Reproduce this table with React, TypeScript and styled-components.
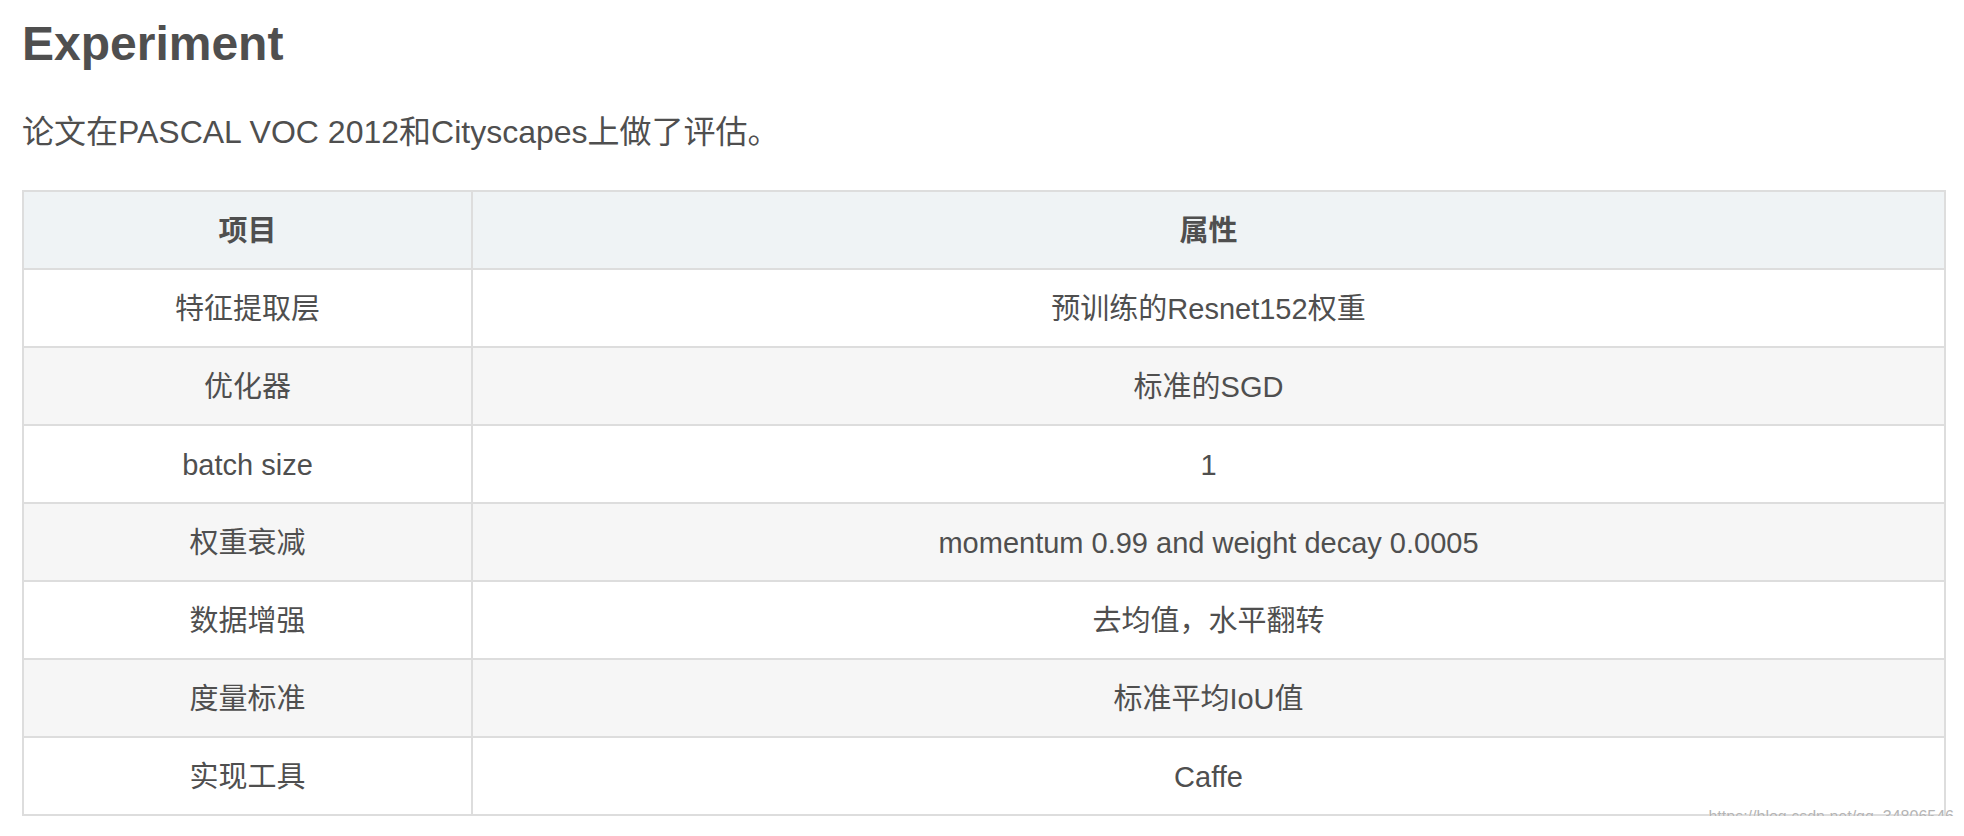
import React from 'react'
import styled, { createGlobalStyle } from 'styled-components'

const GlobalStyle = createGlobalStyle`
  html, body {
    margin: 0;
    padding: 0;
    background: #ffffff;
  }
  body {
    font-family: "Liberation Sans", Arial, "Noto Sans CJK SC", sans-serif;
    color: #4f4f4f;
  }
`

const rows: [string, string][] = [
  ['特征提取层', '预训练的Resnet152权重'],
  ['优化器', '标准的SGD'],
  ['batch size', '1'],
  ['权重衰减', 'momentum 0.99 and weight decay 0.0005'],
  ['数据增强', '去均值，水平翻转'],
  ['度量标准', '标准平均IoU值'],
  ['实现工具', 'Caffe'],
]

export default function App() {
  return (
    <Page>
      <GlobalStyle />
      <Title>Experiment</Title>
      <Text>论文在PASCAL VOC 2012和Cityscapes上做了评估。</Text>
      <TableWrap>
        <Table>
          <colgroup>
            <col style={{ width: 449 }} />
            <col />
          </colgroup>
          <thead>
            <tr>
              <HeadCell>项目</HeadCell>
              <HeadCell>属性</HeadCell>
            </tr>
          </thead>
          <tbody>
            {rows.map(([name, value], i) => (
              <Row key={name} striped={i % 2 === 1}>
                <Cell>{name}</Cell>
                <Cell>{value}</Cell>
              </Row>
            ))}
          </tbody>
        </Table>
        <Watermark>https://blog.csdn.net/qq_34806546</Watermark>
      </TableWrap>
    </Page>
  )
}

const Page = styled.div`
  padding: 15px 18px 0 22px;
`

const Title = styled.h2`
  margin: 0;
  font-size: 48px;
  line-height: 58px;
  font-weight: bold;
  color: #4f4f4f;
`

const Text = styled.p`
  margin: 34px 0 0;
  font-size: 32px;
  line-height: 50px;
  color: #4f4f4f;
`

const TableWrap = styled.div`
  position: relative;
  margin-top: 33px;
`

const Table = styled.table`
  width: 1924px;
  border-collapse: collapse;
  table-layout: fixed;
  font-size: 29px;
  line-height: 36px;
  color: #4f4f4f;
`

const HeadCell = styled.th`
  box-sizing: border-box;
  height: 78px;
  padding: 2px 10px 0;
  border: 2px solid #dddddd;
  background: #eff3f5;
  font-weight: bold;
  text-align: center;
  vertical-align: middle;
`

const Row = styled.tr<{ striped: boolean }>`
  background: ${p => (p.striped ? '#f6f6f6' : '#ffffff')};
`

const Cell = styled.td`
  box-sizing: border-box;
  height: 78px;
  padding: 2px 10px 0;
  border: 2px solid #dddddd;
  text-align: center;
  vertical-align: middle;
`

const Watermark = styled.div`
  position: absolute;
  right: -8px;
  top: calc(100% - 9px);
  font-size: 16px;
  line-height: 20px;
  color: #b4b4b4;
  text-shadow: 0 0 1px #ffffff;
  white-space: nowrap;
`
